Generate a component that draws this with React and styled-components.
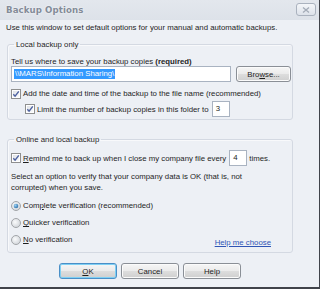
import React from 'react';
import styled, { createGlobalStyle } from 'styled-components';

const Global = createGlobalStyle`
  html, body { margin: 0; padding: 0; background: #edf0f5; }
  #root { width: 320px; height: 289px; }
`;

const Window = styled.div`
  width: 320px;
  height: 289px;
  box-sizing: border-box;
  background: #edf0f5;
  border-right: 1px solid #40434a;
  border-bottom: 2px solid #40434a;
  display: flex;
  flex-direction: column;
  font-family: "Liberation Sans", Arial, sans-serif;
  font-size: 7.8px;
  line-height: 11px;
  color: #1e1e1e;
  overflow: hidden;
`;

const TitleBar = styled.div`
  height: 20px;
  flex: none;
  display: flex;
  align-items: center;
  justify-content: space-between;
  padding: 0 3px 0 6px;
  background: linear-gradient(#e3e7ed, #dde2e9);
`;

const Title = styled.div`
  font-family: "DejaVu Sans", sans-serif;
  font-weight: bold;
  font-size: 8.6px;
  color: #838b98;
  letter-spacing: 0.1px;
  text-shadow: 0 0 2px #ffffff;
`;

const CloseBtn = styled.div`
  width: 18px;
  height: 11px;
  margin-top: -1px;
  border: 1px solid #aab2be;
  border-radius: 3px;
  background: linear-gradient(#f4f6f9, #dde2ea);
  display: flex;
  align-items: center;
  justify-content: center;
`;

const Body = styled.div`
  flex: 1;
  display: flex;
  flex-direction: column;
  padding: 2px 0 0 6px;
`;

const Text = styled.div`
  margin-top: ${p => p.$mt || 0}px;
  white-space: nowrap;
`;

const Group = styled.fieldset`
  margin: ${p => p.$mt || 0}px 0 0 1px;
  width: 286px;
  box-sizing: border-box;
  border: 1px solid #d4d9e2;
  border-radius: 3px;
  padding: 0 0 ${p => p.$pb || 0}px 3px;
  display: flex;
  flex-direction: column;
  min-width: 0;
  box-shadow: inset 1px 1px 0 #f8f9fb;
`;

const Legend = styled.legend`
  padding: 0 2px;
  margin-left: 3px;
  line-height: 11px;
`;

const Row = styled.div`
  display: flex;
  align-items: center;
  height: ${p => p.$h || 11}px;
  margin-top: ${p => p.$mt || 0}px;
  margin-left: ${p => p.$ml || 0}px;
  white-space: nowrap;
`;

const PathInput = styled.div`
  width: 220px;
  height: 16px;
  box-sizing: border-box;
  border: 1px solid #a9b3c1;
  background: #fff;
  display: flex;
  align-items: center;
  padding-left: 2px;
`;

const Selected = styled.span`
  background: #3399ff;
  color: #fff;
  line-height: 10px;
  padding: 0 1px;
`;

const Button = styled.div`
  width: ${p => p.$w || 58}px;
  height: 16px;
  box-sizing: border-box;
  border: 1px solid ${p => (p.$default ? '#4a8fc7' : '#8a8f96')};
  border-radius: 3px;
  background: linear-gradient(#f6f6f6 0%, #ebebeb 48%, #dddddd 52%, #cfcfcf 100%);
  box-shadow: ${p => (p.$default ? 'inset 0 0 0 1px #7fd0f4' : 'inset 0 0 0 1px #fbfbfb')};
  display: flex;
  align-items: center;
  justify-content: center;
  margin-left: ${p => p.$ml || 0}px;
  color: #1e1e1e;
`;

const U = styled.span`
  text-decoration: underline;
`;

const Bold = styled.b`
  font-weight: bold;
`;

const SmallInput = styled.div`
  width: 18px;
  height: 16px;
  box-sizing: border-box;
  border: 1px solid #a9b3c1;
  background: #fff;
  margin-left: ${p => p.$ml || 0}px;
  margin-right: ${p => p.$mr || 0}px;
  padding-left: 3px;
  line-height: 14px;
`;

const BoxWrap = styled.span`
  width: 10px;
  height: 10px;
  margin-right: 2px;
  flex: none;
  display: inline-flex;
`;

const Check = () => (
  <BoxWrap>
    <svg width="10" height="10" viewBox="0 0 10 10">
      <defs>
        <linearGradient id="cbg" x1="0" y1="0" x2="1" y2="1">
          <stop offset="0" stopColor="#dfe2e6" />
          <stop offset="1" stopColor="#fafbfc" />
        </linearGradient>
      </defs>
      <rect x="0.5" y="0.5" width="9" height="9" fill="#fff" stroke="#8e8f8f" />
      <rect x="2" y="2" width="6" height="6" fill="url(#cbg)" />
      <path d="M2.3 5.2 L4.1 7.2 L7.8 2.3" fill="none" stroke="#4d61a0" strokeWidth="1.4" />
    </svg>
  </BoxWrap>
);

const Radio = ({ on }) => (
  <BoxWrap>
    <svg width="10" height="10" viewBox="0 0 10 10">
      <defs>
        <radialGradient id="rbg" cx="0.4" cy="0.4" r="0.6">
          <stop offset="0" stopColor="#fafbfc" />
          <stop offset="1" stopColor="#d3d7dc" />
        </radialGradient>
        <radialGradient id="rdot" cx="0.35" cy="0.35" r="0.7">
          <stop offset="0" stopColor="#9fd3f5" />
          <stop offset="1" stopColor="#2c6fa8" />
        </radialGradient>
      </defs>
      <circle cx="5" cy="5" r="4.5" fill="url(#rbg)" stroke="#a2a5a9" />
      {on && <circle cx="5" cy="5" r="2.3" fill="url(#rdot)" />}
    </svg>
  </BoxWrap>
);

const LinkText = styled.span`
  color: #2f55b5;
  text-decoration: underline;
`;

const LinkRow = styled.div`
  display: flex;
  justify-content: flex-end;
  width: 260px;
  margin-top: -8px;
  line-height: 11px;
`;

const ButtonRow = styled.div`
  display: flex;
  margin-top: 10px;
  padding-left: 53px;
`;

export default function App() {
  return (
    <>
      <Global />
      <Window>
        <TitleBar>
          <Title>Backup Options</Title>
          <CloseBtn>
            <svg width="8" height="6" viewBox="0 0 8 6">
              <path d="M1 0.5 L7 5.5 M7 0.5 L1 5.5" stroke="#a3abb7" strokeWidth="1.3" />
            </svg>
          </CloseBtn>
        </TitleBar>
        <Body>
          <Text>Use this window to set default options for your manual and automatic backups.</Text>
          <Group $mt={6} $pb={2}>
            <Legend>Local backup only</Legend>
            <Text $mt={6}>
              Tell us where to save your backup copies <Bold>(required)</Bold>
            </Text>
            <Row $h={16} $mt={-1}>
              <PathInput>
                <Selected>\\MARS\Information Sharing\</Selected>
              </PathInput>
              <Button $w={55} $ml={5}>
                <span>
                  Bro<U>w</U>se...
                </span>
              </Button>
            </Row>
            <Row $mt={6}>
              <Check />
              Add the date and time of the backup to the file name (recommended)
            </Row>
            <Row $h={16} $mt={2} $ml={14}>
              <Check />
              Limit the number of backup copies in this folder to
              <SmallInput $ml={3}>3</SmallInput>
            </Row>
          </Group>
          <Group $mt={14} $pb={4}>
            <Legend>Online and local backup</Legend>
            <Row $h={16} $mt={5}>
              <Check />
              <span>
                <U>R</U>emind me to back up when I close my company file every
              </span>
              <SmallInput $ml={3} $mr={2}>4</SmallInput>
              times.
            </Row>
            <Text $mt={5}>Select an option to verify that your company data is OK (that is, not</Text>
            <Text>corrupted) when you save.</Text>
            <Row $mt={7}>
              <Radio on />
              <span>
                Com<U>p</U>lete verification (recommended)
              </span>
            </Row>
            <Row $mt={6}>
              <Radio />
              <span>
                <U>Q</U>uicker verification
              </span>
            </Row>
            <Row $mt={6}>
              <Radio />
              <span>
                <U>N</U>o verification
              </span>
            </Row>
            <LinkRow>
              <LinkText>Help me choose</LinkText>
            </LinkRow>
          </Group>
          <ButtonRow>
            <Button $default>
              <span>
                <U>O</U>K
              </span>
            </Button>
            <Button $ml={4}>Cancel</Button>
            <Button $ml={4}>Help</Button>
          </ButtonRow>
        </Body>
      </Window>
    </>
  );
}
